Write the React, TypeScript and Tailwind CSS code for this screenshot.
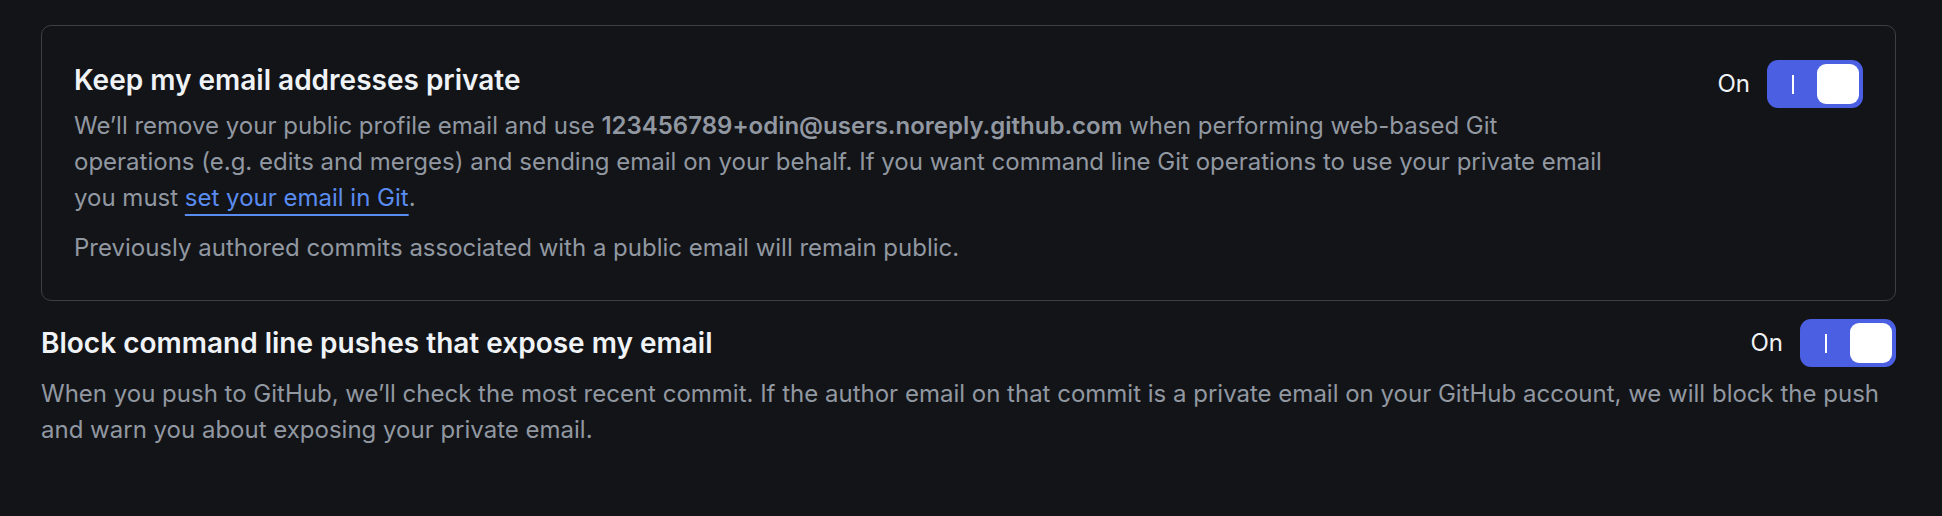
import React from "react";

function Toggle() {
  return (
    <div className="flex items-center gap-[17px]">
      <span className="text-[24px] leading-[36px] text-[#f0f3f6]">On</span>
      <button className="relative h-[48px] w-[96px] rounded-[11px] bg-[#4a5fe2]">
        <span className="absolute left-[25px] top-[15px] h-[19px] w-[2px] bg-white" />
        <span className="absolute right-[4px] top-[4px] h-[40px] w-[42px] rounded-[9px] bg-white" />
      </button>
    </div>
  );
}

export default function App() {
  return (
    <div
      className="min-h-[516px] w-full bg-[#131418] pt-[25px]"
      style={{ fontFamily: "Inter, 'Noto Sans', sans-serif" }}
    >
      <div className="ml-[41px] w-[1855px]">
        <div className="flex items-start justify-between rounded-[10px] border border-[#3d3f46] px-[32px] pt-[34px] pb-[34px]">
          <div className="w-[1550px]">
            <h2 className="text-[28px] font-semibold leading-[40px] text-[#f0f3f6]">Keep my email addresses private</h2>
            <p className="mt-[8px] text-[24px] leading-[36px] text-[#9198a1]">
              We’ll remove your public profile email and use{" "}
              <strong className="font-semibold">123456789+odin@users.noreply.github.com</strong> when performing web-based Git
              operations (e.g. edits and merges) and sending email on your behalf. If you want command line Git operations to use
              your private email you must{" "}
              <a href="#" className="text-[#5a8cf0] underline decoration-[2px] underline-offset-[8px]">set your email in Git</a>.
            </p>
            <p className="mt-[14px] text-[24px] leading-[36px] text-[#9198a1]">
              Previously authored commits associated with a public email will remain public.
            </p>
          </div>
          <Toggle />
        </div>

        <div className="mt-[18px] flex items-center justify-between">
          <h2 className="text-[28px] font-semibold leading-[40px] text-[#f0f3f6]">Block command line pushes that expose my email</h2>
          <Toggle />
        </div>
        <p className="mt-[9px] text-[24px] leading-[36px] text-[#9198a1]">
          When you push to GitHub, we’ll check the most recent commit. If the author email on that commit is a private email on
          your GitHub account, we will block the push and warn you about exposing your private email.
        </p>
      </div>
    </div>
  );
}
